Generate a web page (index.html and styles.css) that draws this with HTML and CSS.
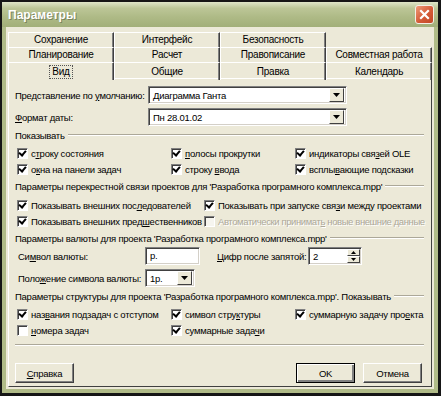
FILE: index.html
```html
<!DOCTYPE html>
<html lang="ru">
<head>
    <meta charset="UTF-8">
    <meta name="viewport" content="width=device-width, initial-scale=1.0">
    <title>Параметры</title>
    <link rel="stylesheet" href="styles.css">
</head>
<body>
    <div class="window">
        <div class="titlebar">
            <span class="title">Параметры</span>
            <span class="close">
                <svg width="17" height="17" viewBox="0 0 17 17"><path d="M5 5 L12 12 M12 5 L5 12" stroke="#fff" stroke-width="2.2" stroke-linecap="square"/></svg>
            </span>
        </div>
        <div class="client">
            <div class="tabs">
                <div class="tab">Сохранение</div>
                <div class="tab">Интерфейс</div>
                <div class="tab">Безопасность</div>
                <div class="tab-empty"></div>
                <div class="tab">Планирование</div>
                <div class="tab">Расчет</div>
                <div class="tab">Правописание</div>
                <div class="tab">Совместная работа</div>
                <div class="tab front active"><span class="focus">Вид</span></div>
                <div class="tab front">Общие</div>
                <div class="tab front">Правка</div>
                <div class="tab front">Календарь</div>
            </div>
            <div class="panel">
                <div class="field-row first">
                    <span class="field-label">Представление по <u>у</u>молчанию:</span>
                    <div class="combo wide"><span class="combo-text">Диаграмма Ганта</span><span class="combo-btn"><svg width="7" height="6" viewBox="0 0 7 6"><path d="M0 1 H7 L3.5 5 Z" fill="#000"/></svg></span></div>
                </div>
                <div class="field-row">
                    <span class="field-label"><u>Ф</u>ормат даты:</span>
                    <div class="combo wide"><span class="combo-text">Пн 28.01.02</span><span class="combo-btn"><svg width="7" height="6" viewBox="0 0 7 6"><path d="M0 1 H7 L3.5 5 Z" fill="#000"/></svg></span></div>
                </div>

                <div class="group">Показывать</div>
                <div class="checks three">
                    <label class="check"><span class="box on"></span><span>с<u>т</u>року состояния</span></label>
                    <label class="check"><span class="box on"></span><span><u>п</u>олосы прокрутки</span></label>
                    <label class="check"><span class="box on"></span><span>индикаторы свя<u>з</u>ей OLE</span></label>
                    <label class="check"><span class="box on"></span><span>о<u>к</u>на на панели задач</span></label>
                    <label class="check"><span class="box on"></span><span>строку <u>в</u>вода</span></label>
                    <label class="check"><span class="box on"></span><span>всплы<u>в</u>ающие подсказки</span></label>
                </div>

                <div class="group">Параметры перекрестной связи проектов для 'Разработка програмного комплекса.mpp'</div>
                <div class="checks two">
                    <label class="check"><span class="box on"></span><span>Показывать внешних пос<u>л</u>едователей</span></label>
                    <label class="check"><span class="box on"></span><span>Показывать при запуске свя<u>з</u>и между проектами</span></label>
                    <label class="check"><span class="box on"></span><span>Показывать внешних пред<u>ш</u>ественников</span></label>
                    <label class="check disabled"><span class="box"></span><span>Автоматически принимат<u>ь</u> новые внешние данные</span></label>
                </div>

                <div class="group">Параметры валюты для проекта 'Разработка програмного комплекса.mpp'</div>
                <div class="money-row first-money">
                    <span class="money-label">Си<u>м</u>вол валюты:</span>
                    <div class="edit symbol">р.</div>
                    <span class="digits-label"><u>Ц</u>ифр после запятой:</span>
                    <div class="edit spin"><span class="combo-text">2</span><span class="spin-btns"><span class="spin-btn"><svg width="5" height="3" viewBox="0 0 5 3"><path d="M0 3 H5 L2.5 0 Z" fill="#000"/></svg></span><span class="spin-btn"><svg width="5" height="3" viewBox="0 0 5 3"><path d="M0 0 H5 L2.5 3 Z" fill="#000"/></svg></span></span></div>
                </div>
                <div class="money-row">
                    <span class="money-label">Поло<u>ж</u>ение символа валюты:</span>
                    <div class="combo small"><span class="combo-text">1р.</span><span class="combo-btn"><svg width="7" height="6" viewBox="0 0 7 6"><path d="M0 1 H7 L3.5 5 Z" fill="#000"/></svg></span></div>
                </div>

                <div class="group">Параметры структуры для проекта 'Разработка програмного комплекса.mpp'. Показывать</div>
                <div class="checks three">
                    <label class="check"><span class="box on"></span><span>наз<u>в</u>ания подзадач с отступом</span></label>
                    <label class="check"><span class="box on"></span><span>символ стру<u>к</u>туры</span></label>
                    <label class="check"><span class="box on"></span><span>суммарную задачу про<u>е</u>кта</span></label>
                    <label class="check"><span class="box"></span><span><u>н</u>омера задач</span></label>
                    <label class="check"><span class="box on"></span><span>суммарные зада<u>ч</u>и</span></label>
                </div>

                <div class="separator"></div>

                <div class="buttons">
                    <button class="btn" type="button"><u>С</u>правка</button>
                    <span class="spacer"></span>
                    <button class="btn default" type="button">OK</button>
                    <button class="btn" type="button">Отмена</button>
                </div>
            </div>
        </div>
    </div>
</body>
</html>
```

FILE: styles.css
```css
body {
    margin: 0;
    background-color: #000;
    font-family: "Liberation Sans", Arial, sans-serif;
    font-size: 9.5px;
    letter-spacing: -0.25px;
    white-space: nowrap;
    color: #000;
}

.window {
    width: 441px;
    height: 396px;
    box-sizing: border-box;
    border: 2px solid #161616;
    border-right-width: 3px;
    border-bottom-width: 3px;
    background-color: #b0bb88;
    display: flex;
    flex-direction: column;
}

.titlebar {
    height: 25px;
    flex-shrink: 0;
    background: linear-gradient(#dfe5c8, #bcc697 25%, #aeba86 60%, #a2af79);
    display: flex;
    align-items: center;
    justify-content: space-between;
    padding: 0 4px 0 6px;
}

.title {
    color: #fff;
    font-size: 12px;
    font-weight: bold;
    letter-spacing: 0;
    text-shadow: 1px 1px 0 #79835b;
}

.close {
    width: 17px;
    height: 17px;
    border: 1px solid #f4efe6;
    border-radius: 3px;
    background: linear-gradient(135deg, #ee9a78, #d45a37 55%, #c24725);
    display: flex;
}

.client {
    flex: 1;
    margin: 0 4px 4px 4px;
    background-color: #ece9d8;
    padding: 5px 2px 2px 2px;
    display: flex;
    flex-direction: column;
}

/* вкладки */
.tabs {
    display: grid;
    grid-template-columns: repeat(4, 1fr);
    grid-auto-rows: 15px;
    position: relative;
    z-index: 1;
    font-size: 10px;
}

.tab {
    border-top: 1px solid #fff;
    border-left: 1px solid #fff;
    border-right: 1px solid #404040;
    box-shadow: inset -1px 0 0 #808080;
    display: flex;
    align-items: center;
    justify-content: center;
    line-height: 12px;
}

.tab.front {
    height: 17px;
}

.tab.active {
    background-color: #ece9d8;
}

.focus {
    outline: 1px dotted #555;
    padding: 0 2px;
}

.panel {
    flex: 1;
    margin-top: 1px;
    border: 1px solid;
    border-color: #fff #404040 #404040 #fff;
    padding: 0 7px 0 6px;
    display: flex;
    flex-direction: column;
    overflow: hidden;
}

/* поля */
.field-row {
    height: 18px;
    margin-top: 4px;
    display: flex;
    align-items: center;
}

.field-row.first {
    margin-top: 7px;
}

.field-label {
    width: 133px;
}

.combo,
.edit {
    height: 18px;
    box-sizing: border-box;
    background-color: #fff;
    border: 1px solid;
    border-color: #808080 #fff #fff #808080;
    box-shadow: inset 1px 1px 0 #404040, inset -1px -1px 0 #d4d0c8;
    display: flex;
    align-items: center;
    padding: 2px 2px 2px 4px;
}

.combo.wide {
    width: 199px;
}

.combo.small {
    width: 50px;
}

.combo-text {
    flex: 1;
}

.combo-btn {
    width: 13px;
    height: 12px;
    background-color: #ece9d8;
    border: 1px solid;
    border-color: #fff #404040 #404040 #fff;
    display: flex;
    align-items: center;
    justify-content: center;
}

/* группы */
.group {
    height: 12px;
    margin-top: 3px;
    display: flex;
    align-items: center;
}

.group::after {
    content: "";
    flex: 1;
    margin-left: 3px;
    border-top: 1px solid #aca899;
    border-bottom: 1px solid #fff;
}

.checks {
    display: grid;
    grid-auto-rows: 16px;
    margin-top: 4px;
    padding-left: 2px;
}

.checks.three {
    grid-template-columns: 154px 124px 1fr;
}

.checks.two {
    grid-template-columns: 187px 1fr;
    margin-top: 5px;
}

.check {
    display: flex;
    align-items: center;
    gap: 3px;
}

.box {
    width: 9px;
    height: 9px;
    flex-shrink: 0;
    background-color: #fff;
    border: 1px solid;
    border-color: #808080 #fff #fff #808080;
    box-shadow: inset 1px 1px 0 #404040;
    position: relative;
}

.box.on::after {
    content: "";
    position: absolute;
    left: 2px;
    top: 0px;
    width: 3px;
    height: 5px;
    border-right: 2px solid #000;
    border-bottom: 2px solid #000;
    transform: rotate(40deg);
}

.check.disabled {
    color: #aca899;
    text-shadow: 1px 1px 0 #fff;
    letter-spacing: -0.4px;
}

.check.disabled .box {
    background-color: #f6f5ef;
}

/* валюта */
.money-row {
    height: 18px;
    margin-top: 4px;
    display: flex;
    align-items: center;
}

.money-row.first-money {
    margin-top: 3px;
}

.money-label {
    width: 127px;
    padding-left: 3px;
}

.edit.symbol {
    width: 55px;
    align-items: flex-start;
}

.digits-label {
    width: 91px;
    padding-left: 17px;
}

.edit.spin {
    width: 54px;
    padding-right: 1px;
}

.spin-btns {
    display: flex;
    flex-direction: column;
    height: 14px;
}

.spin-btn {
    width: 11px;
    height: 5px;
    background-color: #ece9d8;
    border: 1px solid;
    border-color: #fff #404040 #404040 #fff;
    display: flex;
    align-items: center;
    justify-content: center;
}

.separator {
    margin-top: 6px;
    border-top: 1px solid #aca899;
    border-bottom: 1px solid #fff;
}

.buttons {
    display: flex;
    gap: 8px;
    margin-top: 17px;
    padding-right: 2px;
}

.spacer {
    flex: 1;
}

.btn {
    width: 59px;
    height: 20px;
    font-family: inherit;
    font-size: 9.5px;
    letter-spacing: -0.25px;
    background-color: #ece9d8;
    border: 1px solid;
    border-color: #fff #404040 #404040 #fff;
    box-shadow: inset -1px -1px 0 #808080;
    padding: 0;
    color: #000;
}

.btn.default {
    border: 1px solid #000;
    box-shadow: inset 1px 1px 0 #fff, inset -2px -2px 0 #808080;
}
```
